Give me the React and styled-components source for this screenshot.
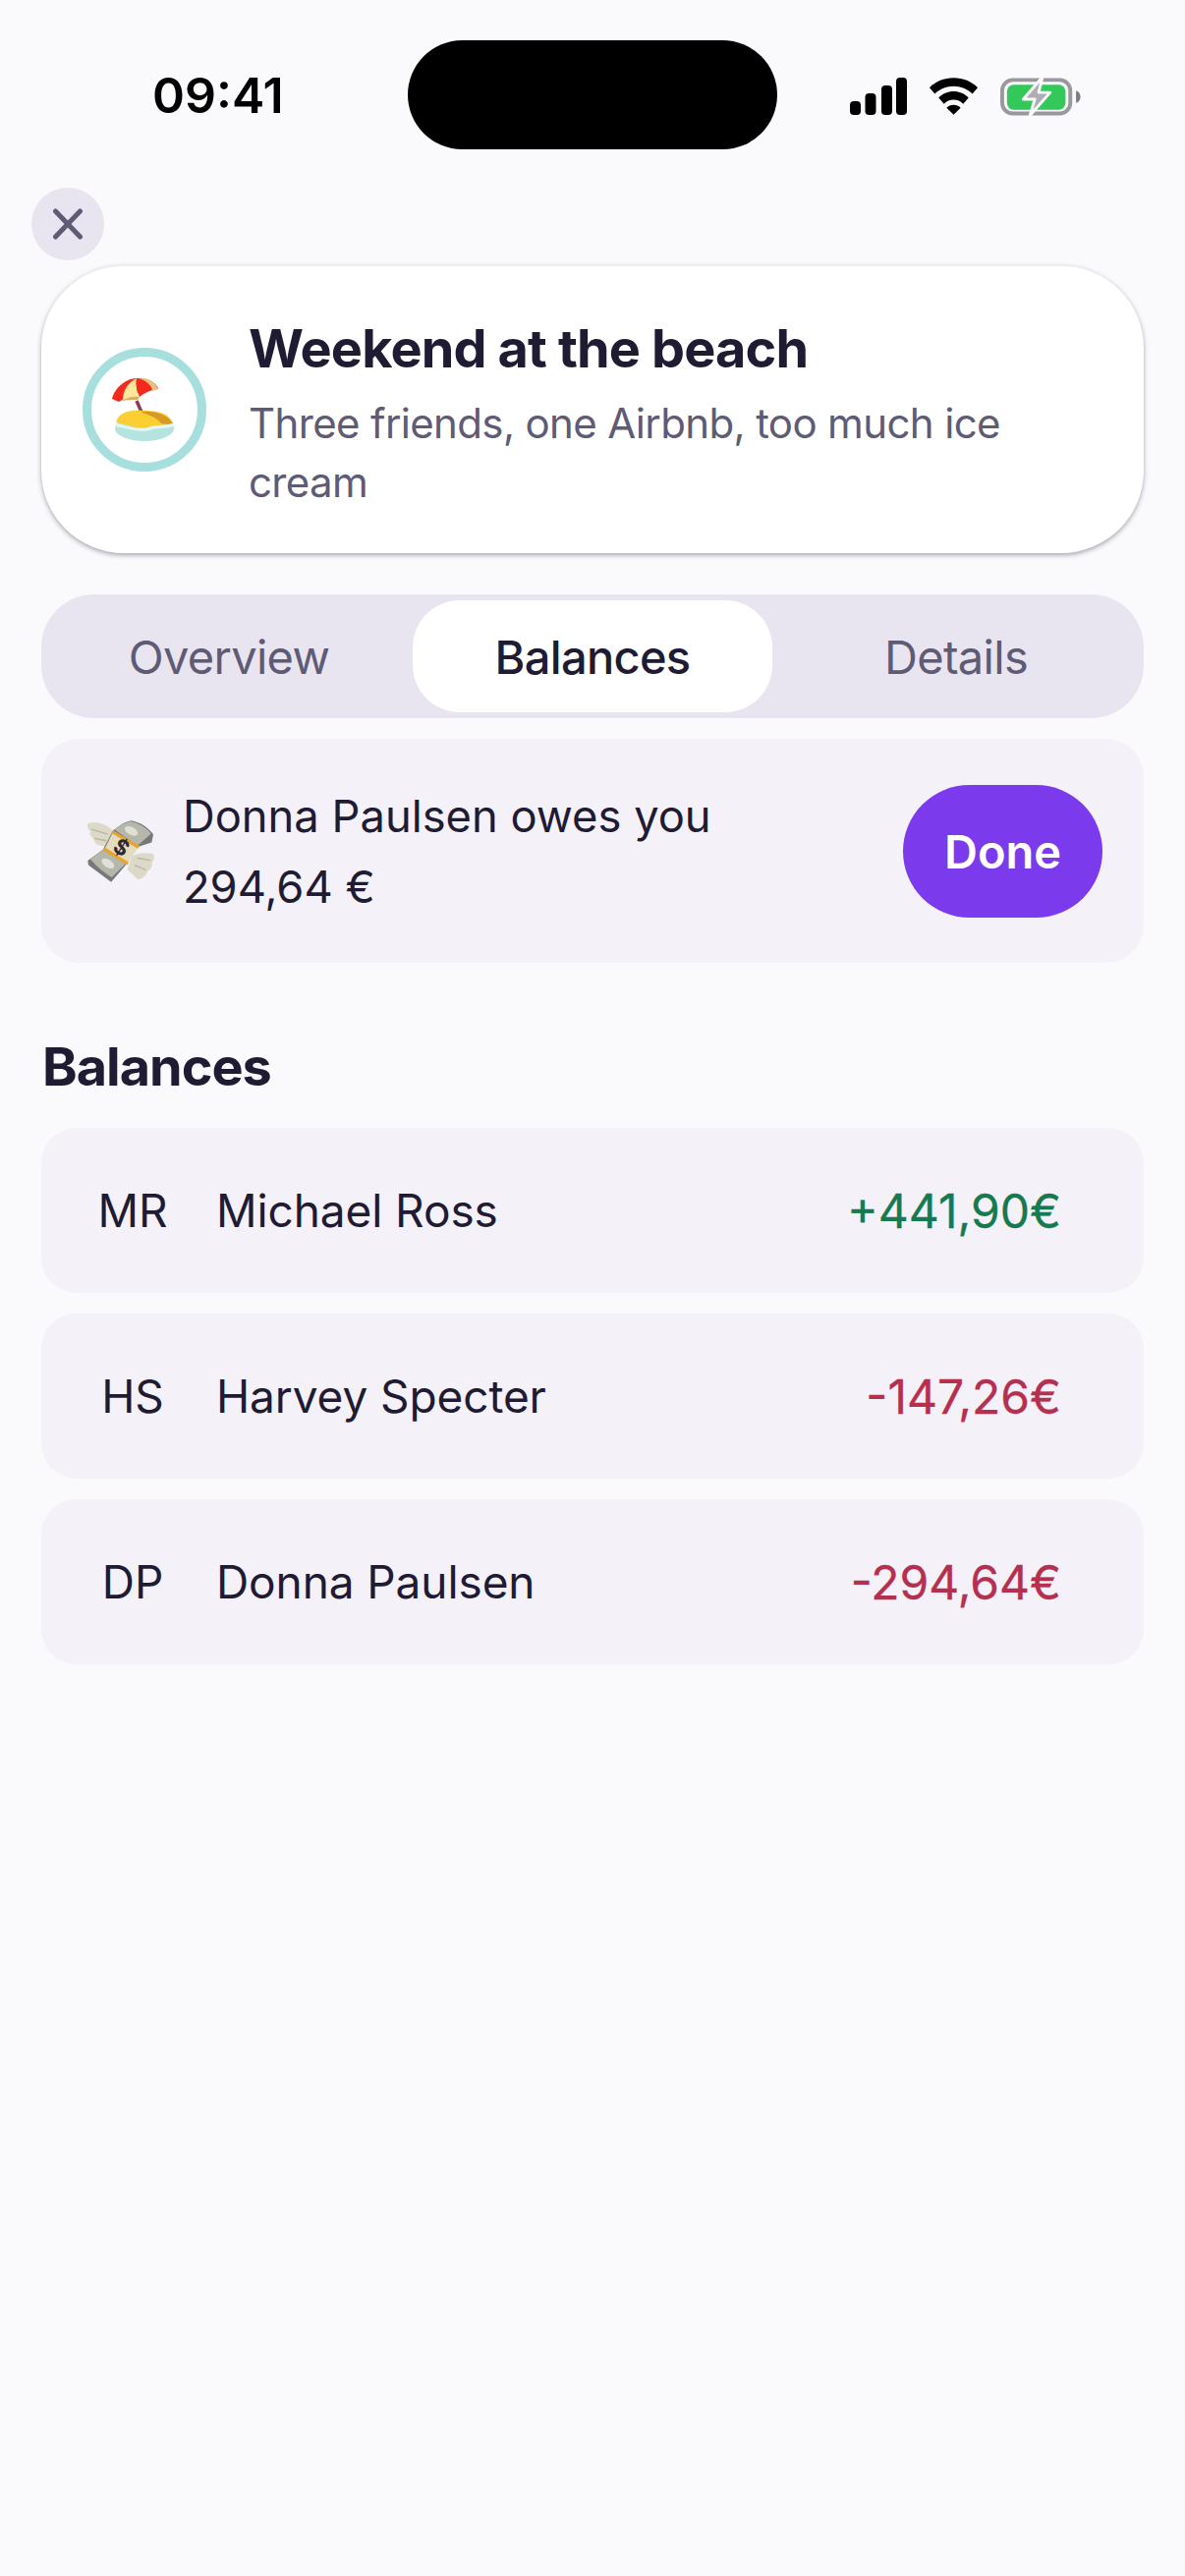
import React from 'react';
import styled, { createGlobalStyle } from 'styled-components';

const GlobalStyle = createGlobalStyle`
	html,
	body {
		margin: 0;
		padding: 0;
		background: #fafafd;
	}
	* {
		box-sizing: border-box;
	}
`;

const Screen = styled.div`
	width: 1206px;
	height: 2622px;
	overflow: hidden;
	background: #fafafd;
	color: #1e1b33;
	font-family: Inter, 'Liberation Sans', sans-serif;
`;

const StatusBar = styled.div`
	display: grid;
	grid-template-columns: 415px 376px 1fr;
	height: 191px;
	padding-top: 41px;
`;

const Time = styled.div`
	padding: 30px 0 0 155px;
	font-size: 50px;
	line-height: 52px;
	font-weight: 600;
	color: #000;
`;

const Island = styled.div`
	height: 111px;
	border-radius: 56px;
	background: #000;
`;

const StatusIcons = styled.div`
	display: flex;
	align-items: flex-start;
	padding: 38px 0 0 74px;
	gap: 22px;
`;

const Content = styled.div`
	padding: 0 42px;
`;

const CloseButton = styled.div`
	display: flex;
	align-items: center;
	justify-content: center;
	width: 74px;
	height: 74px;
	margin: 0 0 5px -10px;
	border-radius: 50%;
	background: #e8e5f0;
`;

const HeroCard = styled.div`
	display: flex;
	align-items: center;
	gap: 43px;
	height: 293px;
	padding: 0 42px;
	border-radius: 84px;
	background: #fff;
	border-top: 1px solid #efeef4;
	box-shadow: 0 2px 5px rgba(30, 27, 51, 0.38);
`;

const EmojiRing = styled.div`
	display: flex;
	flex: none;
	align-items: center;
	justify-content: center;
	width: 126px;
	height: 126px;
	border: 9px solid #a6dfde;
	border-radius: 50%;
`;

const HeroText = styled.div`
	min-width: 0;
	margin-top: 7px;
`;

const HeroTitle = styled.h1`
	margin: 0 0 12px;
	font-size: 54px;
	line-height: 68px;
	font-weight: 700;
	letter-spacing: -0.85px;
`;

const HeroSubtitle = styled.p`
	margin: 0;
	font-size: 42px;
	line-height: 60px;
	letter-spacing: -0.64px;
	color: #5f5b75;
`;

const Tabs = styled.div`
	display: grid;
	grid-template-columns: repeat(3, 1fr);
	height: 126px;
	margin-top: 42px;
	padding: 6px;
	border-radius: 54px;
	background: #e8e5f0;
`;

const Tab = styled.div`
	display: flex;
	align-items: center;
	justify-content: center;
	margin: 0 2px;
	border-radius: 48px;
	font-size: 47px;
	letter-spacing: -0.7px;
	font-weight: ${(p) => (p.$active ? 500 : 400)};
	color: ${(p) => (p.$active ? '#1e1b33' : '#5f5b75')};
	background: ${(p) => (p.$active ? '#fff' : 'transparent')};
`;

const DebtCard = styled.div`
	display: flex;
	align-items: center;
	height: 228px;
	margin-top: 21px;
	padding: 0 42px 0 44px;
	border-radius: 38px;
	background: #f4f1f9;
`;

const DebtText = styled.div`
	flex: 1;
	margin-left: 26px;
	padding-top: 2px;
	font-size: 45.3px;
	line-height: 72px;
`;

const DoneButton = styled.div`
	display: flex;
	align-items: center;
	justify-content: center;
	width: 203px;
	height: 135px;
	border-radius: 68px;
	background: #7c3aed;
	color: #fff;
	font-size: 47px;
	font-weight: 600;
`;

const SectionTitle = styled.h2`
	margin: 74px 0 30px 1px;
	font-size: 54px;
	line-height: 64px;
	font-weight: 700;
	letter-spacing: -1px;
`;

const BalanceList = styled.div`
	display: flex;
	flex-direction: column;
	gap: 21px;
`;

const BalanceRow = styled.div`
	display: flex;
	align-items: center;
	height: 168px;
	padding: 0 84px 0 45px;
	border-radius: 36px;
	background: #f4f1f9;
	font-size: 46px;
`;

const Initials = styled.div`
	width: 96px;
	text-align: center;
`;

const Name = styled.div`
	flex: 1;
	margin-left: 37px;
	letter-spacing: -0.1px;
`;

const Amount = styled.div`
	font-size: 48px;
	color: ${(p) => (p.$positive ? '#167a50' : '#b5304f')};
	-webkit-text-stroke: 0.3px currentColor;
`;

const SignalIcon = () => (
	<svg width="58" height="38" viewBox="0 0 58 38">
		<rect x="0" y="24" width="11" height="14" rx="4" fill="#000" />
		<rect x="15.500" y="16" width="11" height="22" rx="4" fill="#000" />
		<rect x="32" y="8" width="11" height="30" rx="4" fill="#000" />
		<rect x="47" y="0" width="11" height="38" rx="4" fill="#000" />
	</svg>
);

const WifiIcon = () => (
	<svg width="51" height="38" viewBox="0 0 52 38">
		<path d="M26 0C16 0 7.500 3.600 1 10l5.500 6.500C11.500 11.500 18.500 8.500 26 8.500s14.500 3 19.500 8L51 10C44.500 3.600 36 0 26 0Z" fill="#000" />
		<path d="M26 14c-6 0-11.500 2.300-15.500 6.500L16 26.800c2.600-2.800 6-4.300 10-4.300s7.400 1.500 10 4.300l5.500-6.300C37.500 16.300 32 14 26 14Z" fill="#000" />
		<path d="M26 28c-2.900 0-5.400 1-7.300 3L26 38l7.300-7C31.400 29 28.900 28 26 28Z" fill="#000" />
	</svg>
);

const BatteryIcon = () => (
	<svg width="82" height="42" viewBox="0 0 84 42" style={{ marginTop: -2 }}>
		<rect x="2" y="4" width="71" height="35" rx="11" fill="none" stroke="#98989e" strokeWidth="4" />
		<rect x="7" y="9" width="61" height="26" rx="7" fill="#34c759" />
		<path d="M79 15c3 .8 4.500 3.300 4.500 6.500S82 27.200 79 28Z" fill="#7c7c80" />
		<path d="M44 1 24 24h12l-5 17 21-24H40Z" fill="#aeaeb2" stroke="#fafafd" strokeWidth="3" strokeLinejoin="round" />
	</svg>
);

const CloseIcon = () => (
	<svg width="32" height="32" viewBox="0 0 32 32">
		<path d="M3.500 3 28.500 29M28.500 3 3.500 29" stroke="#5f5b75" strokeWidth="5" strokeLinecap="round" />
	</svg>
);

const BeachEmoji = () => (
	<svg width="68" height="66" viewBox="0 0 68 66">
		<path d="M26 24 33 40" stroke="#8e3a5a" strokeWidth="3.500" />
		<ellipse cx="34" cy="52" rx="30" ry="13" fill="#b4e3e0" />
		<path d="M5 46C8 34 22 33 33 34c14 0 26 2 30 13-10 3-16 1-24 4-12 3-24-4-34-5Z" fill="#fbcf33" />
		<path d="M30 35c12-1 26 1 33 12-5 1-8 1-12 0-4-6-12-8-21-12Z" fill="#d99a25" />
		<path d="M4 47c10 1 22 7 34 4 8-3 14-1 25-4l1 3c-10 3-17 1-25 4-12 3-24-3-35-4Z" fill="#e6f6f0" />
		<path d="M1 22C4 10 16 1 26 1 38 0 46 6 48 11 36 12 18 18 8 25Z" fill="#f42b1c" />
		<path d="M12 23C12 13 18 5 26 1c-1 6 0 14 3 19Z" fill="#fde79a" />
		<path d="M29 20c-3-6-4-13-3-19 9 0 18 4 22 11-6 0-14 4-19 8Z" fill="#f42b1c" />
		<path d="M28 1c8-1 16 2 20 11l-6 2c0-5-6-11-14-13Z" fill="#e6c27e" />
		<path d="M10 24c8-4 13-5 19-4l-2 3c-6 0-11 0-17 1Z" fill="#dcae62" />
	</svg>
);

const MoneyEmoji = () => (
	<svg width="74" height="71" viewBox="80 90 220 215">
		<path d="M165 132C135 106 110 106 88 112c-3 10 0 18 8 22-4 10 2 20 10 24 0 12 12 22 24 22l22 4Z" fill="#ddd9c8" />
		<path d="M224 212c22-10 45-12 66-6 5 12 2 20-4 26 2 12-4 22-14 26-2 14-14 24-30 26l-32-30Z" fill="#ddd9c8" />
		<path d="M100 130 150 145M108 158 145 165M240 218 280 225M232 240 268 255" stroke="#b9b5a5" strokeWidth="4" fill="none" />
		<path d="M88 226 135 192 165 135C185 118 200 108 222 103 250 108 275 125 290 145L285 170 240 185 205 240 160 292 90 240Z" fill="#77787a" />
		<path d="M170 130C185 118 200 110 220 105 245 110 270 125 283 143 270 155 255 170 240 180Z" fill="#b5b7aa" />
		<ellipse cx="222" cy="135" rx="22" ry="12" transform="rotate(28 222 135)" fill="#e0e1d6" />
		<path d="M96 222C110 212 125 200 140 190L205 235C190 250 175 265 162 278 140 265 115 245 96 222Z" fill="#b5b7aa" />
		<ellipse cx="150" cy="235" rx="22" ry="12" transform="rotate(32 150 235)" fill="#e0e1d6" />
		<path d="M165 140 245 185 210 235 140 190Z" fill="#e4dcc0" />
		<path d="M165 138 245 185M138 190 212 236" stroke="#e8a42c" strokeWidth="10" fill="none" />
		<text x="190" y="208" fontSize="66" fontWeight="700" fontFamily="Inter, sans-serif" fill="#2a2a35" textAnchor="middle" transform="rotate(32 190 188)">$</text>
	</svg>
);

const balances = [
	{ initials: 'MR', name: 'Michael Ross', amount: '+441,90€', positive: true },
	{ initials: 'HS', name: 'Harvey Specter', amount: '-147,26€' },
	{ initials: 'DP', name: 'Donna Paulsen', amount: '-294,64€' },
];

const App = () => {
	return (
		<Screen>
			<GlobalStyle />
			<StatusBar>
				<Time>09:41</Time>
				<Island />
				<StatusIcons>
					<SignalIcon />
					<WifiIcon />
					<BatteryIcon />
				</StatusIcons>
			</StatusBar>
			<Content>
				<CloseButton>
					<CloseIcon />
				</CloseButton>
				<HeroCard>
					<EmojiRing>
						<BeachEmoji />
					</EmojiRing>
					<HeroText>
						<HeroTitle>Weekend at the beach</HeroTitle>
						<HeroSubtitle>Three friends, one Airbnb, too much ice cream</HeroSubtitle>
					</HeroText>
				</HeroCard>
				<Tabs>
					<Tab>Overview</Tab>
					<Tab $active>Balances</Tab>
					<Tab>Details</Tab>
				</Tabs>
				<DebtCard>
					<MoneyEmoji />
					<DebtText>
						Donna Paulsen owes you
						<br />
						294,64 €
					</DebtText>
					<DoneButton>Done</DoneButton>
				</DebtCard>
				<SectionTitle>Balances</SectionTitle>
				<BalanceList>
					{balances.map((b) => (
						<BalanceRow key={b.initials}>
							<Initials>{b.initials}</Initials>
							<Name>{b.name}</Name>
							<Amount $positive={b.positive}>{b.amount}</Amount>
						</BalanceRow>
					))}
				</BalanceList>
			</Content>
		</Screen>
	);
};

export default App;
